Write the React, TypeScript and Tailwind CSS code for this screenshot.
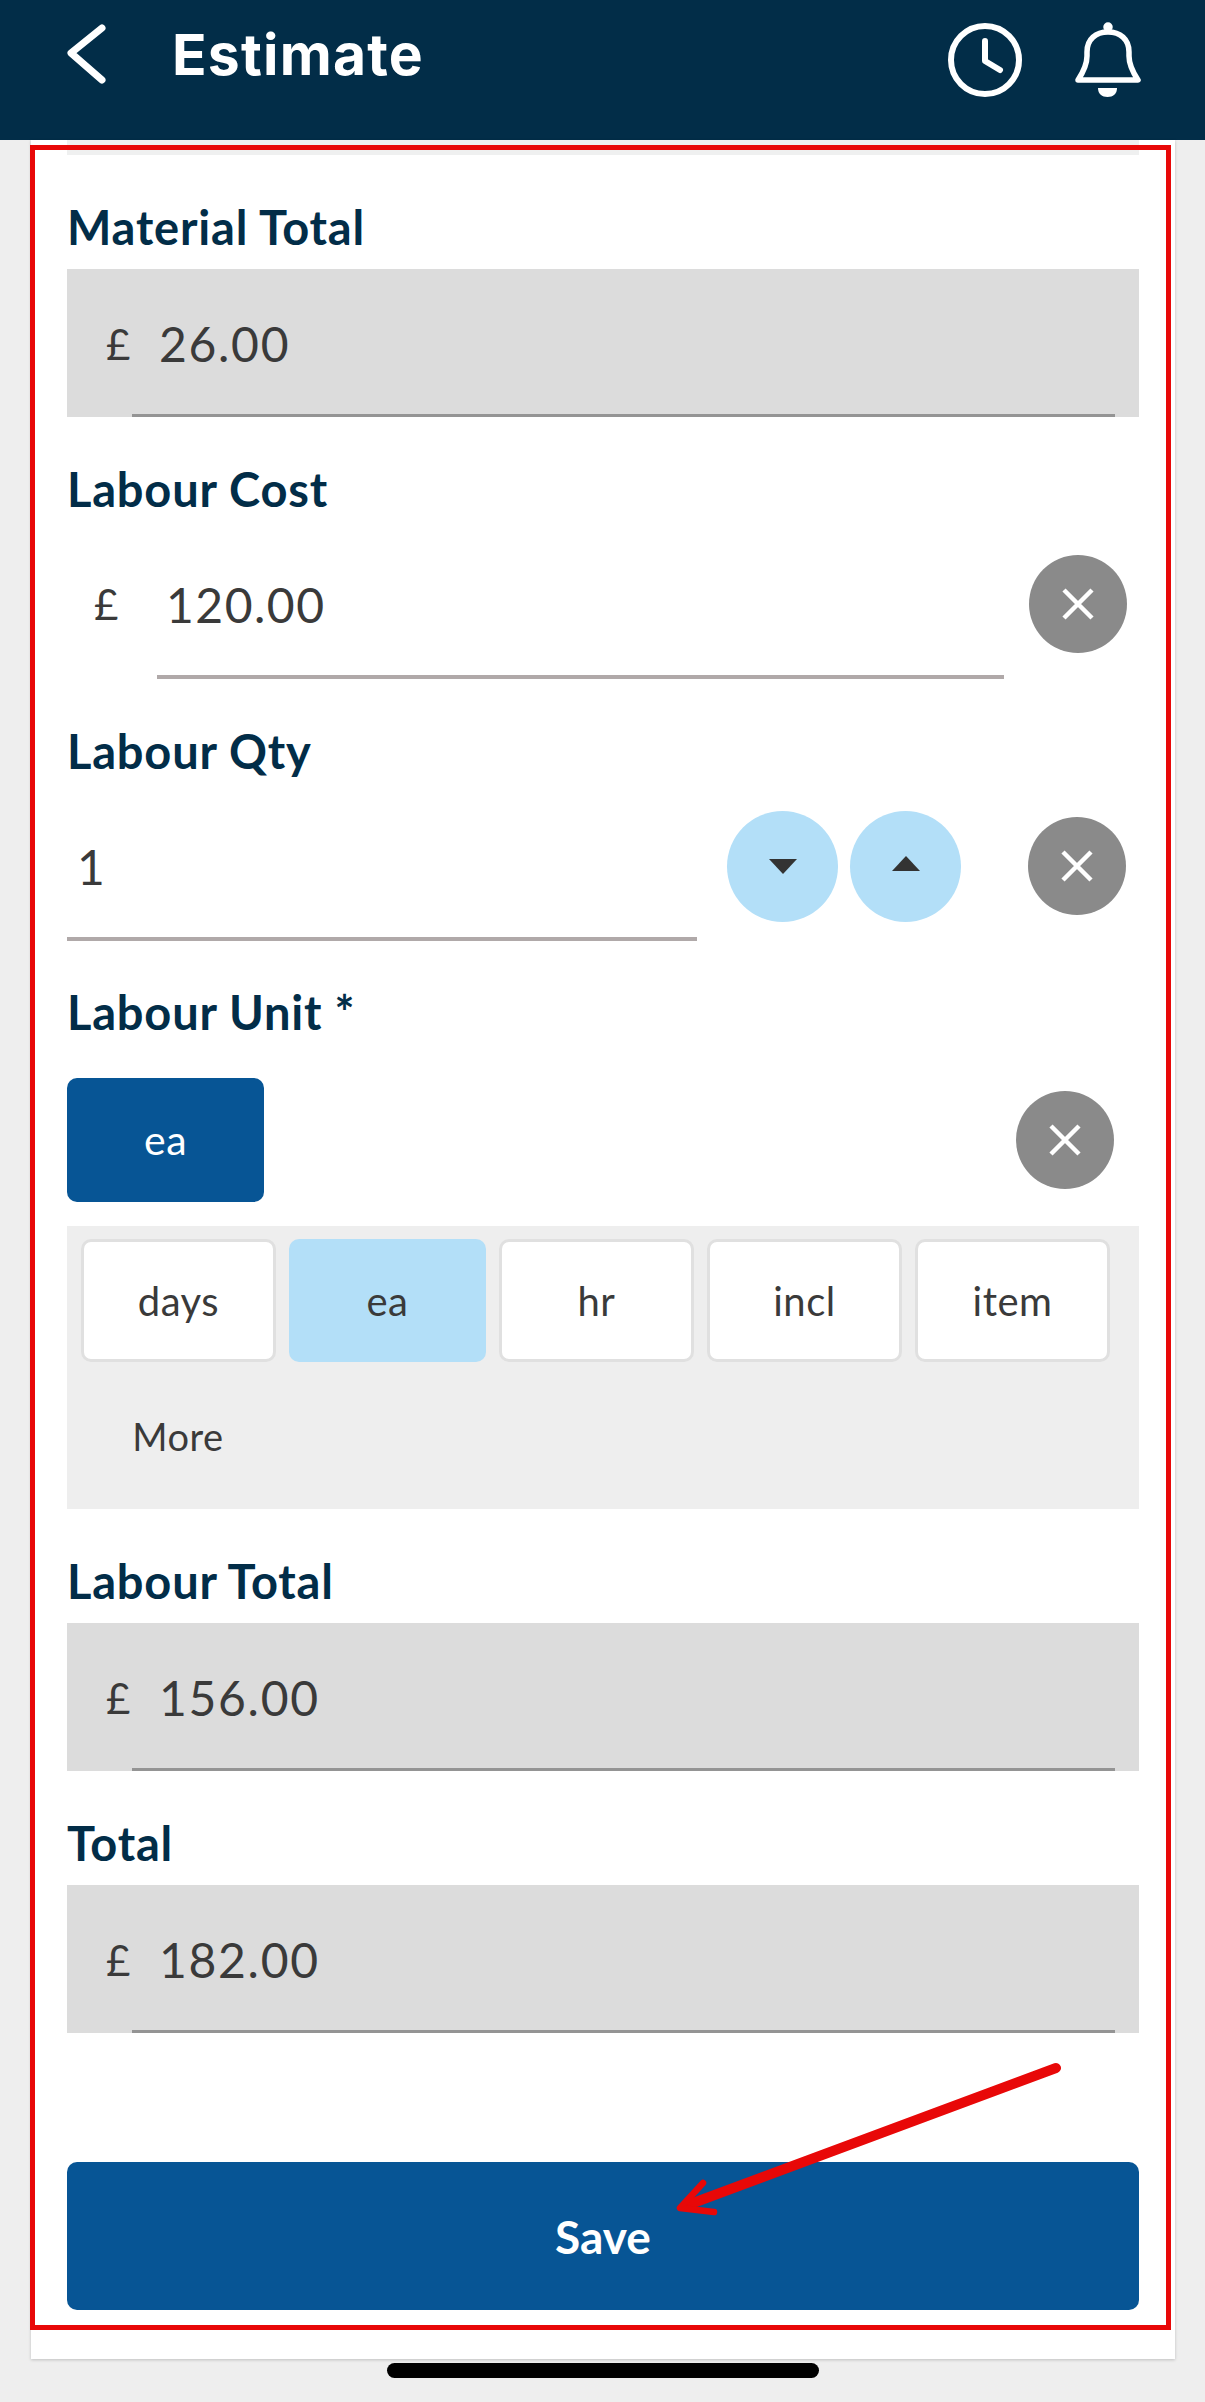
const lato = { fontFamily: '"Lato", "Liberation Sans", sans-serif' };

function Label({ children }: { children: React.ReactNode }) {
  return <div className="h-[78px] pb-[2px] flex items-center text-[47px] font-bold text-[#022d48] tracking-[0.8px]">{children}</div>;
}

function ClearBtn() {
  return (
    <div className="w-[98px] h-[98px] rounded-full bg-[#8a8a8a] flex items-center justify-center shrink-0">
      <svg width="34" height="34" viewBox="0 0 34 34" fill="none" stroke="#fff" strokeWidth="4.5">
        <path d="M3 3L31 31M31 3L3 31" />
      </svg>
    </div>
  );
}

function Readonly({ value }: { value: string }) {
  return (
    <div className="h-[148px] bg-[#dcdcdc] flex pr-[24px] text-[#3a3a3a]">
      <div className="w-[65px] shrink-0 pl-[39px] flex items-center">
        <span className="text-[42px] leading-none mt-[2px]">£</span>
      </div>
      <div className="flex-1 border-b-[3px] border-[#949494] pl-[27px] pt-[4px] flex items-center text-[48px] tracking-[1.7px]">{value}</div>
    </div>
  );
}

function Chip({ text, active }: { text: string; active?: boolean }) {
  return (
    <div className={active ? "w-[197px] h-[123px] rounded-[10px] bg-[#b3dff8] flex items-center justify-center text-[40px] text-[#3a3a3a] tracking-[0.5px]" : "w-[195px] h-[123px] rounded-[10px] bg-white border-[3px] border-[#e0e0e0] flex items-center justify-center text-[40px] text-[#3a3a3a] tracking-[0.5px]"}>
      {text}
    </div>
  );
}

export default function App() {
  return (
    <div className="relative w-[1205px] h-[2402px] bg-[#eeeeee] overflow-hidden" style={lato}>
      <header className="h-[140px] bg-[#022d48] flex items-start text-white">
        <svg className="ml-[67px] mt-[24px] shrink-0" width="40" height="60" viewBox="0 0 40 60" fill="none" stroke="#fff" strokeWidth="7" strokeLinecap="round" strokeLinejoin="round">
          <path d="M35 4L4 29L35 56" />
        </svg>
        <div className="ml-[65px] mt-[24px] text-[57px] leading-[62px] font-bold tracking-[1.2px]" style={{ fontFamily: '"Inter", sans-serif' }}>Estimate</div>
        <div className="ml-auto mr-[63px] mt-[22px] flex items-start gap-[51px]">
          <svg width="76" height="76" viewBox="0 0 76 76" fill="none" stroke="#fff" strokeWidth="6" strokeLinecap="round" strokeLinejoin="round">
            <circle cx="38" cy="38" r="34" />
            <path d="M38 19V39L53 48" />
          </svg>
          <svg width="68" height="76" viewBox="0 0 68 76" fill="none" stroke="#fff" strokeWidth="5.5" strokeLinecap="round" strokeLinejoin="round">
            <path d="M4 58C8 52 13 44 13 34V30C13 17 22 10 34 10C46 10 55 17 55 30V34C55 44 60 52 64 58Z" />
            <circle cx="34" cy="5" r="2" fill="#fff" />
            <path d="M24 66H43C43 72 39 75 33.5 75C28 75 24 72 24 66Z" fill="#fff" stroke="none" />
          </svg>
        </div>
      </header>

      <main className="ml-[31px] w-[1144px] h-[2219px] bg-white shadow-[0_1px_3px_rgba(0,0,0,0.2)] px-[36px]">
        <div className="h-[15px] bg-[#eff0f0]" />
        <div className="mt-[34px]"><Label>Material Total</Label></div>
        <div className="mt-[2px]"><Readonly value="26.00" /></div>

        <div className="mt-[34px]"><Label>Labour Cost</Label></div>
        <div className="h-[150px] flex text-[#3a3a3a]">
          <div className="w-[90px] shrink-0 pl-[27px] flex items-center pb-[3px]">
            <span className="text-[42px] leading-none mt-[2px]">£</span>
          </div>
          <div className="w-[847px] border-b-[4px] border-[#b0a9a9] pl-[9px] pt-[5px] flex items-center text-[48px] tracking-[1.5px]">120.00</div>
          <div className="ml-[25px] mt-[26px]"><ClearBtn /></div>
        </div>

        <div className="mt-[34px]"><Label>Labour Qty</Label></div>
        <div className="h-[150px] flex text-[#3a3a3a]">
          <div className="w-[630px] border-b-[4px] border-[#b0a9a9] pl-[10px] pt-[5px] flex items-center text-[48px]">1</div>
          <div className="ml-[30px] mt-[20px] flex gap-[12px]">
            <div className="w-[111px] h-[111px] rounded-full bg-[#b3dff8] flex items-center justify-center">
              <svg width="28" height="15" viewBox="0 0 28 15" fill="#333"><path d="M0 0H28L14 15Z" /></svg>
            </div>
            <div className="w-[111px] h-[111px] rounded-full bg-[#b3dff8] flex items-center justify-center">
              <svg className="mt-[-6px]" width="28" height="15" viewBox="0 0 28 15" fill="#333"><path d="M0 15H28L14 0Z" /></svg>
            </div>
          </div>
          <div className="ml-[67px] mt-[26px]"><ClearBtn /></div>
        </div>

        <div className="mt-[33px]"><Label>Labour Unit *</Label></div>
        <div className="mt-[26px] h-[124px] flex items-start justify-between pr-[25px]">
          <div className="w-[197px] h-[124px] rounded-[10px] bg-[#075595] flex items-center justify-center text-white text-[41px] tracking-[0.5px]">ea</div>
          <div className="mt-[13px]"><ClearBtn /></div>
        </div>
        <div className="mt-[24px] h-[283px] bg-[#eeeeee] px-[14px] pt-[13px] text-[#3a3a3a]">
          <div className="flex gap-[13px] items-start">
            <Chip text="days" />
            <Chip text="ea" active />
            <Chip text="hr" />
            <Chip text="incl" />
            <Chip text="item" />
          </div>
          <div className="w-[194px] h-[136px] flex items-center justify-center text-[38px] tracking-[0.5px] mt-[6px]">More</div>
        </div>

        <div className="mt-[34px]"><Label>Labour Total</Label></div>
        <div className="mt-[2px]"><Readonly value="156.00" /></div>

        <div className="mt-[34px]"><Label>Total</Label></div>
        <div className="mt-[2px]"><Readonly value="182.00" /></div>

        <div className="mt-[129px] h-[148px] rounded-[10px] bg-[#075595] flex items-center justify-center text-white text-[46px] font-bold">Save</div>
      </main>

      <div className="mt-[4px] ml-[387px] w-[432px] h-[15px] rounded-full bg-black" />

      <div className="absolute left-[30px] top-[145px] w-[1141px] h-[2185px] border-[5px] border-[#e80808] pointer-events-none" />
      <svg className="absolute left-0 top-0 pointer-events-none" width="1205" height="2402" fill="none" stroke="#e80808" strokeLinecap="round" strokeLinejoin="round">
        <path d="M1056 2068L685 2206" strokeWidth="10" />
        <path d="M703 2183L680 2208L714 2212" strokeWidth="6.5" />
      </svg>
    </div>
  );
}
